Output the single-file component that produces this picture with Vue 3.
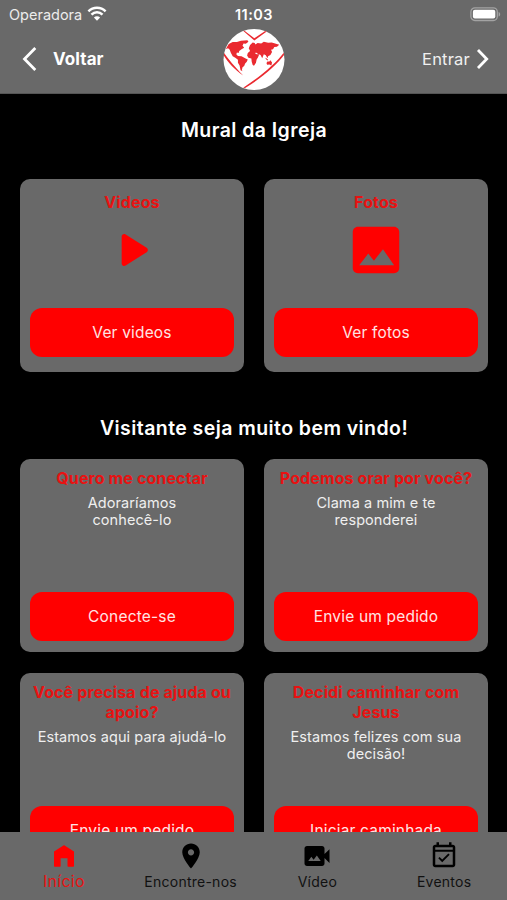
<template>
  <div class="app">
    <header class="header">
      <div class="status-bar">
        <div class="carrier">
          <span>Operadora</span>
          <svg class="wifi" viewBox="0 0 20 15">
            <path d="M1.400 5.300a12.300 12.300 0 0 1 17.200 0" />
            <path d="M4.500 8.600a7.800 7.800 0 0 1 11 0" />
            <path class="wifi-dot" d="M10 14.800l-3.100-3.200a4.400 4.400 0 0 1 6.200 0z" />
          </svg>
        </div>
        <span class="clock">11:03</span>
        <div class="battery-wrap">
          <svg class="battery" viewBox="0 0 31 15">
            <rect x="0.9" y="0.9" width="26.4" height="12.6" rx="4" fill="none" stroke="#a3a3a3" stroke-width="1.3" />
            <rect x="2.9" y="2.8" width="22.4" height="8.8" rx="2" fill="#fff" />
            <path d="M28.6 5v4.600c1-.4 1.600-1.200 1.600-2.300s-.6-1.900-1.600-2.300z" fill="#a3a3a3" />
          </svg>
        </div>
      </div>

      <div class="nav-bar">
        <a class="back">
          <svg class="chevron-left" viewBox="0 0 16 26">
            <path d="M13.300 2L2.500 13l10.800 11" />
          </svg>
          <span>Voltar</span>
        </a>
        <svg class="logo" viewBox="27 13 186 186">
          <defs>
            <clipPath id="disc"><circle cx="120" cy="106" r="93" /></clipPath>
          </defs>
          <circle cx="120" cy="106" r="93" fill="#fff" />
          <g clip-path="url(#disc)" fill="#ea2a30">
            <path d="M87 15l34 26 41-27 2 3-43 31-36-31z" />
            <path d="M25 80c18 27 35 46 62 75-27-20-47-40-62-66z" />
            <path d="M215 80c-31 41-78 79-128 112l6 1c56-34 94-68 122-105z" />
            <!-- Americas -->
            <path d="M43 59l12-6 13 0 12-4 20-2 3 5-8 6-7-1-3 7 5 6-8 5-7 5-2 6-5-1-2 5 5 5 11 1 11 6 8 4-3 7-5 5-3 8-5 4-2 8 2 4-6-3-3-15-5-8 0-9-8-6-8-5-6-11-3-9-5-4-7 2z" />
            <!-- Europe and Africa -->
            <path d="M104 72L108 62 116 54 122 56 128 66 130 85 122 86 128 90 136 90 132 100 128 106 126 116 120 125 116 123 113 113 112 103 103 101 99 94 101 86 108 80z" />
            <!-- Asia -->
            <path d="M122 62L131 56 142 57 150 52 163 55 174 54 187 58 197 61 190 67 182 68 178 75 172 76 175 83 170 92 163 96 161 102 156 93 150 90 145 102 140 92 130 88 124 80z" />
            <!-- Oceania -->
            <path d="M158 117L162 111 166 113 170 108 175 115 173 124 167 121 160 122z" />
            <path d="M156 101l7 6-2 2-6-5z" />
          </g>
        </svg>
        <a class="login">
          <span>Entrar</span>
          <svg class="chevron-right" viewBox="0 0 14 22">
            <path d="M2 2l8.700 9L2 20" />
          </svg>
        </a>
      </div>
    </header>

    <main class="content">
      <h2 class="heading mural">Mural da Igreja</h2>
      <div class="grid media">
        <section class="card" v-for="item in media" :key="item.title">
          <h3 class="card-title">{{ item.title }}</h3>
          <svg class="media-icon" viewBox="0 0 24 24">
            <path :d="item.icon" />
          </svg>
          <button class="btn">{{ item.action }}</button>
        </section>
      </div>

      <h2 class="heading welcome">Visitante seja muito bem vindo!</h2>
      <div class="grid">
        <section class="card" v-for="item in cards" :key="item.title">
          <h3 class="card-title">{{ item.title }}</h3>
          <p class="card-text">{{ item.text }}</p>
          <button class="btn">{{ item.action }}</button>
        </section>
      </div>
    </main>

    <nav class="tabs">
      <a
        v-for="tab in tabs"
        :key="tab.label"
        class="tab"
        :class="{ active: tab.active }"
      >
        <svg class="tab-icon" viewBox="0 0 24 24">
          <path :d="tab.icon" />
        </svg>
        <span>{{ tab.label }}</span>
      </a>
    </nav>
  </div>
</template>

<script setup>
const media = [
  {
    title: "Videos",
    action: "Ver videos",
    icon: "M8 6.820v10.360c0 .79.87 1.270 1.540.84l8.140-5.180c.62-.39.62-1.290 0-1.690L9.540 5.980C8.870 5.550 8 6.030 8 6.820z",
  },
  {
    title: "Fotos",
    action: "Ver fotos",
    icon: "M19 3H5c-1.100 0-2 .9-2 2v14c0 1.100.9 2 2 2h14c1.100 0 2-.9 2-2V5c0-1.100-.9-2-2-2zM5.500 17.900l3.500-4.500 2.200 2.800 3.500-4.500L19 17.900z",
  },
];

const cards = [
  {
    title: "Quero me conectar",
    text: "Adoraríamos\nconhecê-lo",
    action: "Conecte-se",
  },
  {
    title: "Podemos orar por você?",
    text: "Clama a mim e te\nresponderei",
    action: "Envie um pedido",
  },
  {
    title: "Você precisa de ajuda ou\napoio?",
    text: "Estamos aqui para ajudá-lo",
    action: "Envie um pedido",
  },
  {
    title: "Decidi caminhar com\nJesus",
    text: "Estamos felizes com sua\ndecisão!",
    action: "Iniciar caminhada",
  },
];

const tabs = [
  {
    label: "Início",
    active: true,
    icon: "M4.500 20.500c-.3 0-.5-.2-.5-.5V8.400L11.500 3.500c.3-.2.7-.2 1 0L20 8.400V20c0 .3-.2.5-.5.5h-4.200c-.3 0-.5-.2-.5-.5v-6.200H9.300V20c0 .3-.2.5-.5.5z",
  },
  {
    label: "Encontre-nos",
    icon: "M12 2C8.130 2 5 5.130 5 9c0 5.250 7 13 7 13s7-7.750 7-13c0-3.870-3.130-7-7-7zm0 9.500c-1.380 0-2.500-1.120-2.500-2.500s1.120-2.500 2.500-2.500 2.500 1.120 2.500 2.500-1.120 2.500-2.500 2.500z",
  },
  {
    label: "Vídeo",
    icon: "M18 10.480V6c0-1.100-.9-2-2-2H4c-1.100 0-2 .9-2 2v12c0 1.100.9 2 2 2h12c1.100 0 2-.9 2-2v-4.480l4 3.980v-11l-4 3.980zM5 16l2.500-3.330 1.780 2.370L11.880 11.500 15 16H5z",
  },
  {
    label: "Eventos",
    icon: "M16.530 11.060L15.470 10l-4.880 4.880-2.120-2.120-1.060 1.060L10.590 17l5.940-5.940zM19 3h-1V1h-2v2H8V1H6v2H5c-1.110 0-1.990.9-1.990 2L3 19c0 1.100.89 2 2 2h14c1.100 0 2-.9 2-2V5c0-1.100-.9-2-2-2zm0 16H5V8.500h14V19zM5 7V5h14v2z",
  },
];
</script>

<style>
body {
  margin: 0;
  background: #000;
}
</style>

<style scoped>
.app {
  display: flex;
  flex-direction: column;
  width: 507px;
  height: 900px;
  overflow: hidden;
  background: #000;
  color: #fff;
  font-family: Inter, "Liberation Sans", sans-serif;
}

.header {
  flex: none;
  height: 94px;
  box-sizing: border-box;
  background: #696969;
  border-bottom: 1px solid #555;
}

.status-bar {
  display: grid;
  grid-template-columns: 1fr auto 1fr;
  align-items: center;
  height: 28px;
  padding: 0 6px 0 9px;
}

.carrier {
  display: flex;
  align-items: center;
  gap: 5px;
  font-size: 14.5px;
  color: #ececec;
}

.wifi {
  width: 20px;
  height: 15px;
  margin-top: -2px;
  fill: none;
  stroke: #fff;
  stroke-width: 2.5;
}

.wifi .wifi-dot {
  fill: #fff;
  stroke: none;
}

.clock {
  margin-right: 2px;
  font-size: 14.5px;
  font-weight: 600;
  letter-spacing: 0.5px;
}

.battery-wrap {
  display: flex;
  justify-content: flex-end;
}

.battery {
  width: 31px;
  height: 15px;
}

.nav-bar {
  display: grid;
  grid-template-columns: 1fr 62px 1fr;
  align-items: center;
  height: 62px;
  padding: 0 17px;
}

.back,
.login {
  display: flex;
  align-items: center;
}

.back {
  gap: 15px;
  padding-left: 5px;
  font-size: 17px;
  font-weight: 700;
  letter-spacing: 0.1px;
}

.logo {
  width: 62px;
  height: 61px;
  margin-top: 1px;
}

.login {
  justify-content: flex-end;
  gap: 6px;
  font-size: 16.5px;
  letter-spacing: 0.2px;
  color: #f0f0f0;
}

.chevron-left,
.chevron-right {
  fill: none;
  stroke: #fff;
  stroke-width: 2.8;
}

.chevron-left {
  width: 16px;
  height: 26px;
}

.chevron-right {
  width: 14px;
  height: 22px;
}

.content {
  flex: 1;
  min-height: 0;
  overflow: hidden;
  padding: 0 19px 0 20px;
}

.heading {
  margin: 0;
  font-size: 19.5px;
  font-weight: 600;
  line-height: 24px;
  letter-spacing: 0.43px;
  text-align: center;
}

.mural {
  padding: 24px 0 37px;
}

.welcome {
  padding: 44px 0 19px;
}

.grid {
  display: grid;
  grid-template-columns: 1fr 1fr;
  gap: 21px 20px;
}

.card {
  display: flex;
  flex-direction: column;
  align-items: center;
  height: 193px;
  box-sizing: border-box;
  padding: 9px 10px 11px;
  border-radius: 10px;
  background: #696969;
  text-align: center;
}

.media .card {
  padding: 13px 10px 15px;
}

.card-title {
  margin: 0;
  font-size: 16px;
  font-weight: 700;
  line-height: 20px;
  letter-spacing: 0.12px;
  white-space: pre;
  color: #e81212;
}

.card-text {
  margin: 6px 0 0;
  font-size: 14.5px;
  line-height: 17px;
  letter-spacing: 0.08px;
  white-space: pre;
  color: #efefef;
}

.media-icon {
  width: 62px;
  height: 62px;
  margin-top: 7px;
  fill: #f00;
}

.btn {
  width: 100%;
  height: 49px;
  margin-top: auto;
  padding: 0;
  border: 0;
  border-radius: 12px;
  background: #f00;
  color: #ffe4e4;
  font-family: inherit;
  font-size: 15.5px;
  letter-spacing: 0.18px;
}

.tabs {
  flex: none;
  display: grid;
  grid-template-columns: repeat(4, 1fr);
  height: 68px;
  background: #696969;
}

.tab {
  display: flex;
  flex-direction: column;
  align-items: center;
  padding: 9px 0 0 1px;
  font-size: 14px;
  line-height: 18px;
  letter-spacing: 0.25px;
  color: #111;
}

.tab span {
  margin-top: 2px;
}

.tab-icon {
  width: 30px;
  height: 30px;
  fill: #000;
}

.active {
  font-size: 16px;
  color: #e81212;
}

.active span {
  margin-top: 1px;
}

.active .tab-icon {
  fill: #f00;
}
</style>
